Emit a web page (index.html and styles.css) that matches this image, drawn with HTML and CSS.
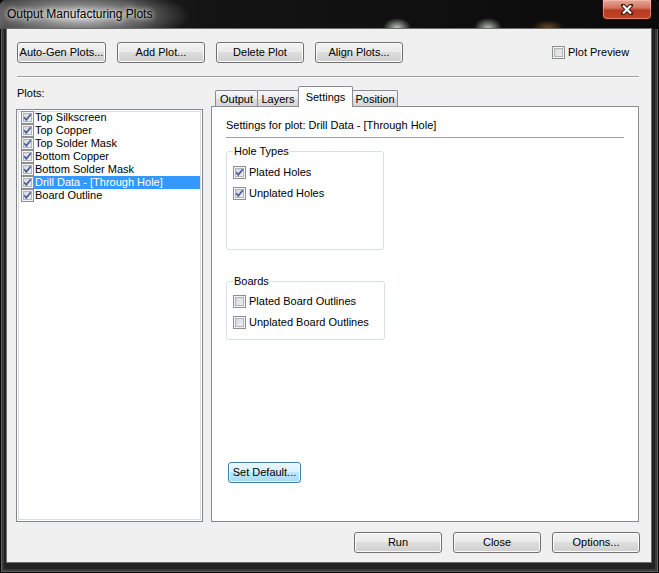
FILE: index.html
```html
<!DOCTYPE html>
<html>
<head>
<meta charset="utf-8">
<title>Output Manufacturing Plots</title>
<link rel="stylesheet" href="styles.css">
</head>
<body>
<div class="window">
  <div class="titlebar">
    <span class="title">Output Manufacturing Plots</span>
    <div class="close">
      <svg width="12" height="11" viewBox="0 0 12 11"><path d="M2 1.5 L10 9.5 M10 1.5 L2 9.5" stroke="#3b1710" stroke-width="4.2" stroke-linecap="round"/><path d="M2 1.5 L10 9.5 M10 1.5 L2 9.5" stroke="#ffffff" stroke-width="2.2"/></svg>
    </div>
  </div>
  <div class="client">
    <div class="toolbar">
      <div class="btn wide">Auto-Gen Plots...</div>
      <div class="btn">Add Plot...</div>
      <div class="btn">Delete Plot</div>
      <div class="btn">Align Plots...</div>
      <div class="opt preview"><span class="cb"></span><span>Plot Preview</span></div>
    </div>
    <div class="sep"></div>
    <div class="main">
      <div class="left">
        <div class="plots-label">Plots:</div>
        <div class="list">
          <div class="row"><span class="cb"><svg width="11" height="11" viewBox="0 0 11 11"><path d="M2.2 5.2 L4.3 7.8 L8.8 2.2" stroke="#4a5d98" stroke-width="1.7" fill="none"/></svg></span><span class="t">Top Silkscreen</span></div>
          <div class="row"><span class="cb"><svg width="11" height="11" viewBox="0 0 11 11"><path d="M2.2 5.2 L4.3 7.8 L8.8 2.2" stroke="#4a5d98" stroke-width="1.7" fill="none"/></svg></span><span class="t">Top Copper</span></div>
          <div class="row"><span class="cb"><svg width="11" height="11" viewBox="0 0 11 11"><path d="M2.2 5.2 L4.3 7.8 L8.8 2.2" stroke="#4a5d98" stroke-width="1.7" fill="none"/></svg></span><span class="t">Top Solder Mask</span></div>
          <div class="row"><span class="cb"><svg width="11" height="11" viewBox="0 0 11 11"><path d="M2.2 5.2 L4.3 7.8 L8.8 2.2" stroke="#4a5d98" stroke-width="1.7" fill="none"/></svg></span><span class="t">Bottom Copper</span></div>
          <div class="row"><span class="cb"><svg width="11" height="11" viewBox="0 0 11 11"><path d="M2.2 5.2 L4.3 7.8 L8.8 2.2" stroke="#4a5d98" stroke-width="1.7" fill="none"/></svg></span><span class="t">Bottom Solder Mask</span></div>
          <div class="row sel"><span class="cb"><svg width="11" height="11" viewBox="0 0 11 11"><path d="M2.2 5.2 L4.3 7.8 L8.8 2.2" stroke="#4a5d98" stroke-width="1.7" fill="none"/></svg></span><span class="t">Drill Data - [Through Hole]</span></div>
          <div class="row"><span class="cb"><svg width="11" height="11" viewBox="0 0 11 11"><path d="M2.2 5.2 L4.3 7.8 L8.8 2.2" stroke="#4a5d98" stroke-width="1.7" fill="none"/></svg></span><span class="t">Board Outline</span></div>
        </div>
      </div>
      <div class="right">
        <div class="tabs">
          <div class="tab t-output">Output</div>
          <div class="tab t-layers">Layers</div>
          <div class="tab active t-settings">Settings</div>
          <div class="tab t-position">Position</div>
        </div>
        <div class="panel">
          <div class="heading">Settings for plot: Drill Data - [Through Hole]</div>
          <div class="hsep"></div>
          <fieldset class="group g-holes">
            <legend>Hole Types</legend>
            <div class="opt"><span class="cb"><svg width="11" height="11" viewBox="0 0 11 11"><path d="M2.2 5.2 L4.3 7.8 L8.8 2.2" stroke="#4a5d98" stroke-width="1.7" fill="none"/></svg></span><span>Plated Holes</span></div>
            <div class="opt"><span class="cb"><svg width="11" height="11" viewBox="0 0 11 11"><path d="M2.2 5.2 L4.3 7.8 L8.8 2.2" stroke="#4a5d98" stroke-width="1.7" fill="none"/></svg></span><span>Unplated Holes</span></div>
          </fieldset>
          <fieldset class="group g-boards">
            <legend>Boards</legend>
            <div class="opt"><span class="cb"></span><span>Plated Board Outlines</span></div>
            <div class="opt"><span class="cb"></span><span>Unplated Board Outlines</span></div>
          </fieldset>
          <div class="btn default">Set Default...</div>
        </div>
      </div>
    </div>
    <div class="footer">
      <div class="btn">Run</div>
      <div class="btn">Close</div>
      <div class="btn">Options...</div>
    </div>
  </div>
</div>
</body>
</html>
```
FILE: styles.css
```css
* { box-sizing: border-box; }

body {
  margin: 0;
  background: #000;
  font-family: "Liberation Sans", Arial, sans-serif;
  font-size: 11px;
  color: #000;
}

.window {
  width: 659px;
  height: 573px;
  display: flex;
  flex-direction: column;
  background: #222;
  border-radius: 6px 6px 0 0;
  overflow: hidden;
  box-shadow: inset 0 0 0 1px #080808, inset 0 0 0 2px #5e5e5e, inset 0 0 0 4px #3a3a3a;
}

.titlebar {
  height: 29px;
  flex: none;
  display: flex;
  align-items: flex-start;
  background:
    radial-gradient(ellipse 110px 28px at 80px 16px, rgba(215,215,215,0.95) 0%, rgba(150,150,150,0.75) 45%, rgba(70,70,70,0) 100%),
    radial-gradient(ellipse 14px 10px at 397px 28px, rgba(220,235,220,0.85), rgba(120,150,120,0) 100%),
    radial-gradient(ellipse 14px 10px at 488px 28px, rgba(220,235,220,0.8), rgba(120,150,120,0) 100%),
    radial-gradient(ellipse 16px 8px at 548px 28px, rgba(190,120,60,0.55), rgba(190,120,60,0) 100%),
    linear-gradient(to right, #4a4a4a 0, #333 6px, #141414 200px, #0b0b0b 100%);
}

.title {
  margin: 6px 0 0 7px;
  font-size: 12px;
  line-height: 16px;
  color: #000;
  text-shadow: 0 0 7px #fff, 0 0 4px rgba(255,255,255,0.8);
}

.close {
  margin-left: auto;
  margin-right: 7px;
  width: 50px;
  height: 20px;
  border: 1px solid #3a0b05;
  border-top: none;
  border-radius: 0 0 5px 5px;
  background: linear-gradient(#e7a797 0%, #d27563 40%, #b63a20 55%, #c4462a 100%);
  box-shadow: inset 0 0 0 1px rgba(255,210,200,0.45);
  display: flex;
  align-items: center;
  justify-content: center;
}

.client {
  margin: 0 8px 0 7px;
  height: 533px;
  flex: none;
  background: #f0f0f0;
  padding: 13px 11px 9px 10px;
  display: flex;
  flex-direction: column;
  box-shadow: 0 0 0 1px #6c6c6c;
}

.toolbar {
  display: flex;
  align-items: center;
  gap: 11px;
  height: 21px;
}

.btn {
  width: 88px;
  height: 21px;
  flex: none;
  border: 1px solid #707070;
  border-radius: 3px;
  background: linear-gradient(#f2f2f2 0%, #ebebeb 50%, #dddddd 50%, #cfcfcf 100%);
  box-shadow: inset 0 0 0 1px #fcfcfc;
  display: flex;
  align-items: center;
  justify-content: center;
  line-height: 13px;
}

.btn.wide { width: 89px; }

.btn.default {
  width: 73px;
  margin: 122px 0 0 2px;
  border-color: #3c7fb1;
  background: linear-gradient(#eaf6fd 0%, #d9f0fc 50%, #bee6fd 50%, #a7d9f5 100%);
  box-shadow: inset 0 0 0 1px rgba(255,255,255,0.7);
}

.opt {
  display: flex;
  align-items: center;
  gap: 3px;
  height: 13px;
  line-height: 13px;
}

.preview { margin-left: 138px; }

.cb {
  width: 13px;
  height: 13px;
  flex: none;
  border: 1px solid #8e8f8f;
  background: linear-gradient(135deg, #cfd2d7 0%, #f5f5f5 100%);
  box-shadow: inset 0 0 0 1px #f4f4f4, inset 0 0 0 2px #b0b4ba;
}

.cb svg { display: block; }

.sep {
  margin-top: 13px;
  width: 622px;
  border-top: 1px solid #a0a0a0;
  border-bottom: 1px solid #fff;
}

.main {
  margin: 8px 0 0 -1px;
  height: 436px;
  display: flex;
  gap: 8px;
}

.left {
  width: 187px;
  display: flex;
  flex-direction: column;
}

.plots-label {
  padding: 1px 0 0 1px;
  line-height: 13px;
  margin-bottom: 9px;
}

.list {
  flex: 1;
  background: #fff;
  border: 1px solid #828790;
  box-shadow: inset 0 0 0 1px #fff, inset 0 0 0 2px #dcdcdc;
  padding: 1px 2px 1px 4px;
}

.row {
  display: flex;
  height: 13px;
  align-items: center;
}

.row .t {
  flex: 1;
  padding-left: 1px;
  line-height: 13px;
  height: 13px;
  white-space: nowrap;
}

.row.sel .t {
  background: #3399ff;
  color: #fff;
}

.right {
  width: 428px;
  display: flex;
  flex-direction: column;
}

.tabs {
  display: flex;
  align-items: flex-end;
  height: 21px;
  margin-bottom: -1px;
  padding-left: 4px;
  position: relative;
  z-index: 1;
}

.tab {
  height: 16px;
  margin-bottom: 1px;
  border: 1px solid #898c95;
  border-bottom: none;
  border-radius: 2px 2px 0 0;
  background: linear-gradient(#f6f6f6, #ebebeb 50%, #dedede 50%, #d6d6d6);
  text-align: center;
  line-height: 15px;
  padding-top: 1px;
}

.tab + .tab { margin-left: -1px; }

.tab.active {
  height: 21px;
  margin-bottom: 0;
  padding-top: 3px;
  background: #fff;
  position: relative;
  z-index: 2;
}

.t-output { width: 43px; }
.t-layers { width: 42px; }
.t-settings { width: 55px; }
.t-position { width: 46px; }

.panel {
  flex: 1;
  background: #fff;
  border: 1px solid #898c95;
  padding: 12px 14px 0 14px;
}

.heading { line-height: 13px; }

.hsep {
  margin-top: 5px;
  width: 398px;
  border-top: 1px solid #a0a0a0;
}

.group {
  margin: 0;
  border: 1px solid #d5dfe5;
  border-radius: 3px;
  padding: 0 0 0 6px;
  min-width: 0;
}

.group legend {
  padding: 0 1px;
  line-height: 13px;
}

.group .opt + .opt { margin-top: 8px; }

.g-holes {
  margin-top: 7px;
  width: 158px;
  padding-top: 8px;
  padding-bottom: 49px;
}

.g-boards {
  margin-top: 25px;
  width: 159px;
  padding-top: 7px;
  padding-bottom: 10px;
}

.footer {
  margin-top: 10px;
  display: flex;
  justify-content: flex-end;
  gap: 11px;
}
```
